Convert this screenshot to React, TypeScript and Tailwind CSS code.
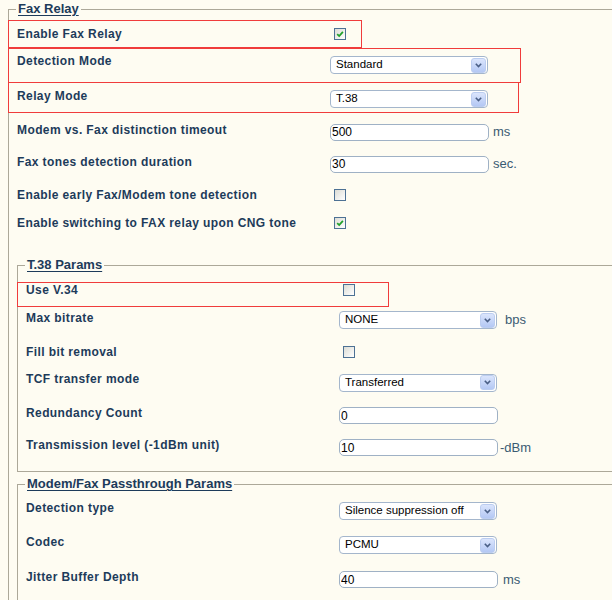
import type { ReactNode } from 'react'

const label = 'shrink-0 w-[313px] text-[12px] leading-4 font-bold tracking-[0.4px] text-[#1d3b5a] whitespace-nowrap'
const legend = '-ml-px px-[2px] text-[13px] leading-4 font-bold text-[#1d3b5a] underline underline-offset-2'
const unit = 'text-[13px] leading-4 text-[#3b5b72]'

function Check({ on }: { on?: boolean }) {
  return (
    <span className="ml-1 flex h-3 w-3 items-center justify-center border border-[#4d7194] bg-gradient-to-br from-[#dcdcd5] to-white">
      {on && (
        <svg width="8" height="8" viewBox="0 0 10 10">
          <path d="M1.5 5.2 L4 7.6 L8.6 2.4" fill="none" stroke="#21a12a" strokeWidth="2.2" />
        </svg>
      )}
    </span>
  )
}

function Select({ value }: { value: string }) {
  return (
    <div className="flex h-[18px] w-[158px] items-center justify-between rounded-[4px] border border-[#a4b6cc] bg-white pl-[5px] pr-px">
      <span className="text-[11.5px] leading-none text-black">{value}</span>
      <span className="flex h-[15px] w-[15px] items-center justify-center rounded-[3px] border border-[#bccdf0] bg-gradient-to-b from-[#dbe5fc] to-[#b4c8f4]">
        <svg width="7" height="5" viewBox="0 0 7 5">
          <path d="M0.8 0.8 L3.5 3.6 L6.2 0.8" fill="none" stroke="#4a5f86" strokeWidth="1.6" />
        </svg>
      </span>
    </div>
  )
}

function Field({ value }: { value: string }) {
  return (
    <input
      readOnly
      value={value}
      className="h-[17px] w-[159px] rounded-[5px] border border-[#9fb1c5] bg-white pl-px text-[12px] leading-none text-black outline-none"
    />
  )
}

function Row({
  h,
  text,
  shift = '',
  mark,
  children,
}: {
  h: string
  text: string
  shift?: string
  mark?: string
  children: ReactNode
}) {
  return (
    <div className={`relative flex items-center ${h}`}>
      {mark && <div className={`pointer-events-none absolute border border-[#f03c3c] ${mark}`} />}
      <span className={`${label} ${shift}`}>{text}</span>
      {children}
    </div>
  )
}

export default function App() {
  return (
    <div className="h-[600px] w-[612px] overflow-hidden bg-[#fefcf2] font-['Liberation_Sans',Arial,sans-serif]">
      {/* the form runs wider than the window, so its right edge is never seen */}
      <div className="w-[720px] pl-2 pt-px">
        <fieldset className="border border-[#aca899] pl-2 pt-[3px]">
          <legend className={legend}>Fax Relay</legend>

          <Row h="h-[28px]" text="Enable Fax Relay" mark="-left-[9px] top-0 h-[28px] w-[354px]">
            <Check on />
          </Row>
          <Row h="h-[34px]" text="Detection Mode" shift="pb-2" mark="-left-[9px] top-0 h-[35px] w-[513px]">
            <Select value="Standard" />
          </Row>
          <Row h="h-[34px]" text="Relay Mode" shift="pb-[6px]" mark="-left-[9px] top-0 h-[31px] w-[511px]">
            <Select value="T.38" />
          </Row>
          <Row h="h-[32px]" text="Modem vs. Fax distinction timeout" shift="pb-1">
            <div className="flex items-center gap-1">
              <Field value="500" />
              <span className={unit}>ms</span>
            </div>
          </Row>
          <Row h="h-[32px]" text="Fax tones detection duration" shift="pb-1">
            <div className="flex items-center gap-1">
              <Field value="30" />
              <span className={unit}>sec.</span>
            </div>
          </Row>
          <Row h="h-[30px]" text="Enable early Fax/Modem tone detection">
            <Check />
          </Row>
          <Row h="h-[26px]" text="Enable switching to FAX relay upon CNG tone">
            <Check on />
          </Row>

          <fieldset className="mt-[21px] border border-[#aca899] pb-[9px] pl-2 pt-[3px]">
            <legend className={legend}>T.38 Params</legend>
            <Row h="h-[28px]" text="Use V.34" mark="-left-[9px] top-[6px] h-[25px] w-[372px]">
              <Check />
            </Row>
            <Row h="h-[32px]" text="Max bitrate" shift="pb-1">
              <div className="flex items-center gap-2">
                <Select value="NONE" />
                <span className={unit}>bps</span>
              </div>
            </Row>
            <Row h="h-[31px]" text="Fill bit removal">
              <Check />
            </Row>
            <Row h="h-[31px]" text="TCF transfer mode" shift="pb-[7px]">
              <Select value="Transferred" />
            </Row>
            <Row h="h-[35px]" text="Redundancy Count" shift="pb-[5px]">
              <Field value="0" />
            </Row>
            <Row h="h-[29px]" text="Transmission level (-1dBm unit)" shift="pb-[5px]">
              <div className="flex items-center gap-[2px]">
                <Field value="10" />
                <span className={unit}>-dBm</span>
              </div>
            </Row>
          </fieldset>

          <fieldset className="mt-1 border border-[#aca899] pb-3 pl-2 pt-[3px]">
            <legend className={legend}>Modem/Fax Passthrough Params</legend>
            <Row h="h-[32px]" text="Detection type" shift="pb-[6px]">
              <Select value="Silence suppression off" />
            </Row>
            <Row h="h-[36px]" text="Codec" shift="pb-[6px]">
              <Select value="PCMU" />
            </Row>
            <Row h="h-[33px]" text="Jitter Buffer Depth" shift="pb-[5px]">
              <div className="flex items-center gap-[5px]">
                <Field value="40" />
                <span className={unit}>ms</span>
              </div>
            </Row>
          </fieldset>
        </fieldset>
      </div>
    </div>
  )
}
